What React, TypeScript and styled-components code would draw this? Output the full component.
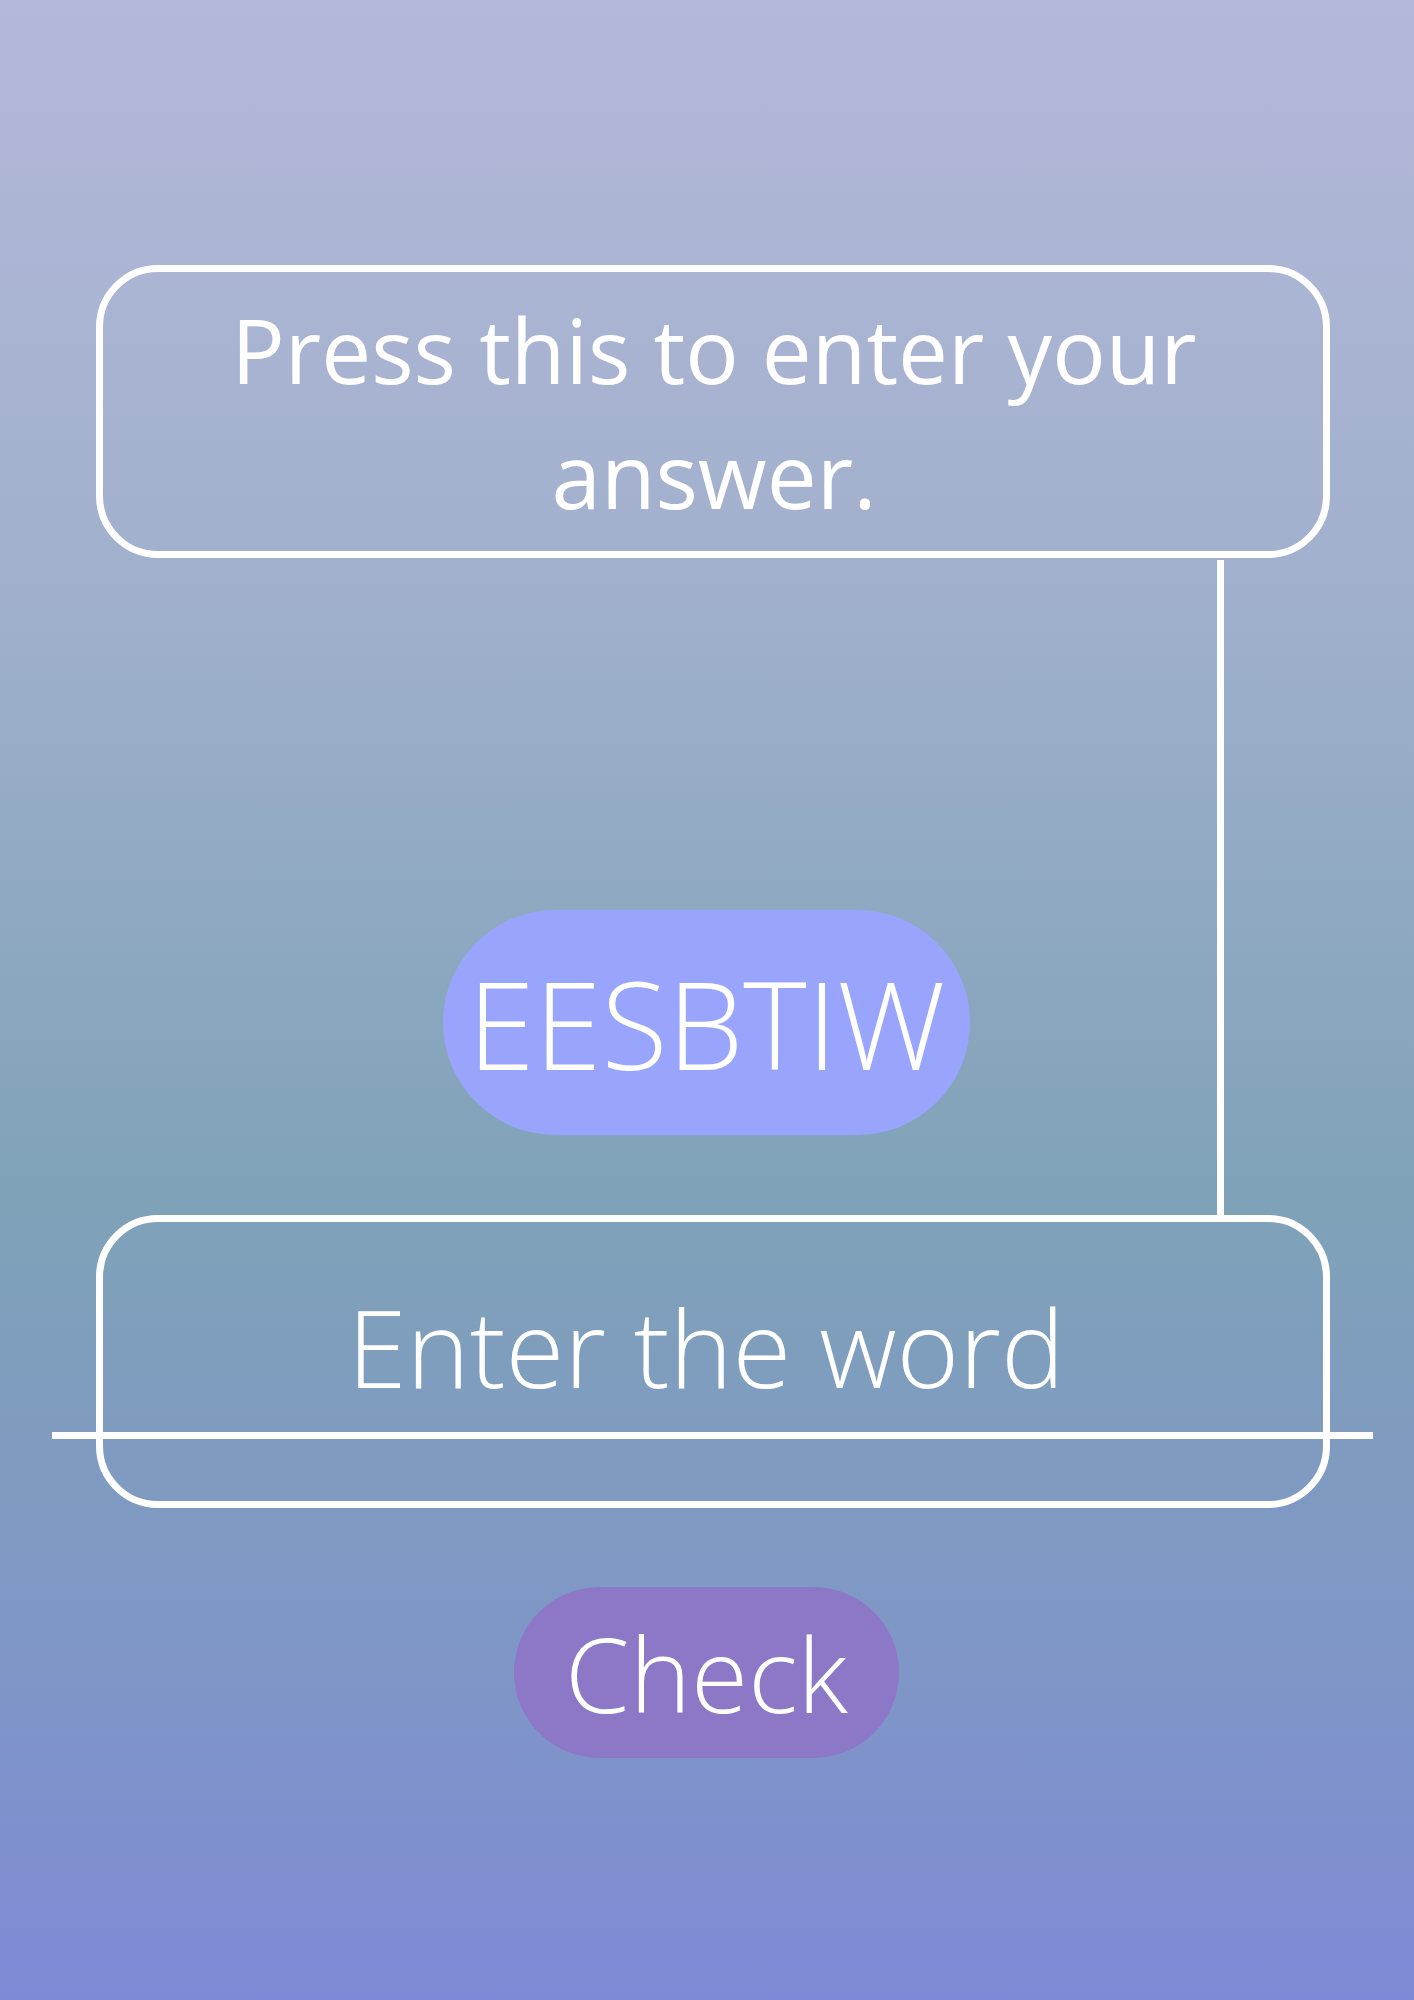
import React from "react";
import styled, { createGlobalStyle } from "styled-components";

const GlobalStyle = createGlobalStyle`
  html, body {
    margin: 0;
    padding: 0;
  }
  body {
    width: 1414px;
    min-height: 2000px;
    font-family: "Open Sans", "Noto Sans", "Liberation Sans", sans-serif;
    background: linear-gradient(
      180deg,
      #b4b8da 0%,
      #a0b0cc 30%,
      #7fa2b8 60%,
      #7f95c8 85%,
      #7f8ad6 100%
    );
  }
`;

const Page = styled.main`
  box-sizing: border-box;
  width: 1414px;
  height: 2000px;
  padding: 265px 84px 0 96px;
  display: flex;
  flex-direction: column;
  color: #ffffff;
  font-family: "Open Sans", "Noto Sans", "Liberation Sans", sans-serif;
  font-weight: 300;
`;

const OutlineBox = styled.div<{ $align?: "center" | "flex-start"; $padTop?: number }>`
  box-sizing: border-box;
  position: relative;
  width: 1234px;
  height: 293px;
  border: 7px solid #ffffff;
  border-radius: 62px;
  display: flex;
  justify-content: center;
  align-items: ${(p) => p.$align ?? "center"};
  padding: ${(p) => p.$padTop ?? 0}px 60px 0;
`;

const PromptText = styled.p`
  margin: 0 0 0 2px;
  font-size: 89px;
  line-height: 125px;
  text-align: center;
  font-weight: 400;
`;

const Middle = styled.div`
  height: 657px;
  display: grid;
  grid-template-areas: "stack";
`;

const Connector = styled.div`
  grid-area: stack;
  justify-self: end;
  align-self: stretch;
  width: 7px;
  margin: 2px 106px 0 0;
  background: #ffffff;
`;

const Pill = styled.div<{ $bg: string; $w: number; $h: number; $size: number }>`
  box-sizing: border-box;
  width: ${(p) => p.$w}px;
  height: ${(p) => p.$h}px;
  border-radius: ${(p) => p.$h / 2}px;
  background: ${(p) => p.$bg};
  display: flex;
  align-items: center;
  justify-content: center;
  font-size: ${(p) => p.$size}px;
  font-weight: 300;
  color: #ffffff;
  white-space: nowrap;
`;

const WordPill = styled(Pill)`
  grid-area: stack;
  justify-self: center;
  align-self: end;
  margin: 0 13px 80px 0;
`;

const AnswerText = styled.span`
  font-size: 107px;
  font-weight: 300;
  line-height: normal;
  margin-left: -14px;
`;

const Underline = styled.div`
  position: absolute;
  left: -51px;
  right: -50px;
  top: 210px;
  height: 7px;
  background: #ffffff;
`;

const CheckRow = styled.div`
  display: flex;
  justify-content: center;
  padding: 79px 13px 0 0;
`;

const CheckButton = styled(Pill).attrs({ as: "button" })`
  border: none;
  font-family: inherit;
  padding: 0;
  cursor: pointer;
`;

export default function App() {
  return (
    <>
      <GlobalStyle />
      <Page>
        <OutlineBox>
          <PromptText>Press this to enter your answer.</PromptText>
        </OutlineBox>
        <Middle>
          <WordPill $bg="#99a5fd" $w={527} $h={225} $size={121}>
            EESBTIW
          </WordPill>
          <Connector />
        </Middle>
        <OutlineBox $align="flex-start" $padTop={52}>
          <AnswerText>Enter the word</AnswerText>
          <Underline />
        </OutlineBox>
        <CheckRow>
          <CheckButton $bg="#8c78c6" $w={385} $h={171} $size={104}>
            Check
          </CheckButton>
        </CheckRow>
      </Page>
    </>
  );
}
